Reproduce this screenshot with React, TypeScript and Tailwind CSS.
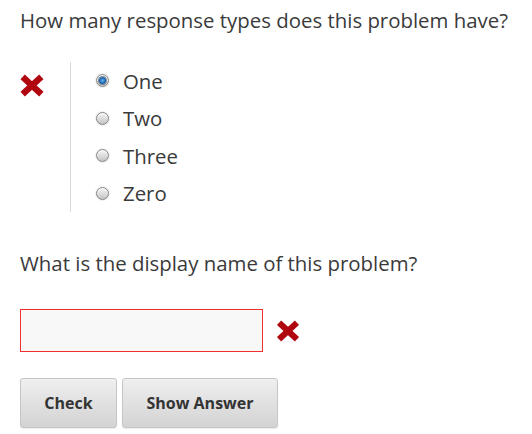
import { useState } from "react";

const options = ["One", "Two", "Three", "Zero"];

function RedX({ className }: { className?: string }) {
  return (
    <svg viewBox="0 0 24 23" className={className} aria-hidden="true">
      <g stroke="#b0060f" strokeWidth="6.4" strokeLinecap="square">
        <line x1="5" y1="5" x2="19" y2="18" />
        <line x1="19" y1="5" x2="5" y2="18" />
      </g>
    </svg>
  );
}

function Radio({ checked }: { checked: boolean }) {
  return (
    <span className="flex h-[13px] w-[13px] shrink-0 items-center justify-center rounded-full border border-[#858585] bg-linear-to-b from-[#f6f6f6] to-[#c4c4c4] shadow-[0_0_0_1px_rgba(0,0,0,0.06),inset_0_1px_1px_rgba(255,255,255,0.9)]">
      {checked && (
        <span className="h-[7px] w-[7px] rounded-full bg-radial from-[#6fb6ee] via-[#1f6fb8] to-[#0b3f75] shadow-[0_0_0_1px_rgba(20,40,70,0.5)]" />
      )}
    </span>
  );
}

export default function App() {
  const [choice, setChoice] = useState("One");

  return (
    <div className="min-h-[434px] bg-white px-[20px] pt-[6px] text-[#3a3a3a] font-['Open_Sans',sans-serif]">
      <p className="text-[20.4px] leading-[28px]">
        How many response types does this problem have?
      </p>

      <div className="mt-[28px] flex">
        <div className="w-[50px] shrink-0 pt-[12px]">
          <RedX className="h-[23px] w-[24px]" />
        </div>
        <div className="flex flex-col border-l border-[#d9d9d9] pl-[25px]">
          {options.map((opt) => (
            <label
              key={opt}
              className="flex h-[37.5px] cursor-pointer items-center gap-[14px] text-[20.4px] leading-[28px]"
              onClick={() => setChoice(opt)}
            >
              <Radio checked={choice === opt} />
              <span>{opt}</span>
            </label>
          ))}
        </div>
      </div>

      <p className="mt-[37px] text-[20.4px] leading-[28px]">
        What is the display name of this problem?
      </p>

      <div className="mt-[32px] flex items-center gap-[13px]">
        <input
          type="text"
          className="h-[43px] w-[243px] border border-[#f03030] bg-[#f8f8f8] px-2 outline-none"
        />
        <RedX className="h-[22px] w-[24px]" />
      </div>

      <div className="mt-[26px] flex gap-[5px]">
        <button className="h-[50px] w-[97px] rounded-[3px] border border-[#c6c6c6] bg-linear-to-b from-[#efefef] to-[#d3d3d3] text-[16px] font-bold text-[#333] shadow-[0_1px_1px_rgba(0,0,0,0.08)]">
          Check
        </button>
        <button className="h-[50px] w-[156px] rounded-[3px] border border-[#c6c6c6] bg-linear-to-b from-[#efefef] to-[#d3d3d3] text-[16px] font-bold text-[#333] shadow-[0_1px_1px_rgba(0,0,0,0.08)]">
          Show Answer
        </button>
      </div>
    </div>
  );
}
